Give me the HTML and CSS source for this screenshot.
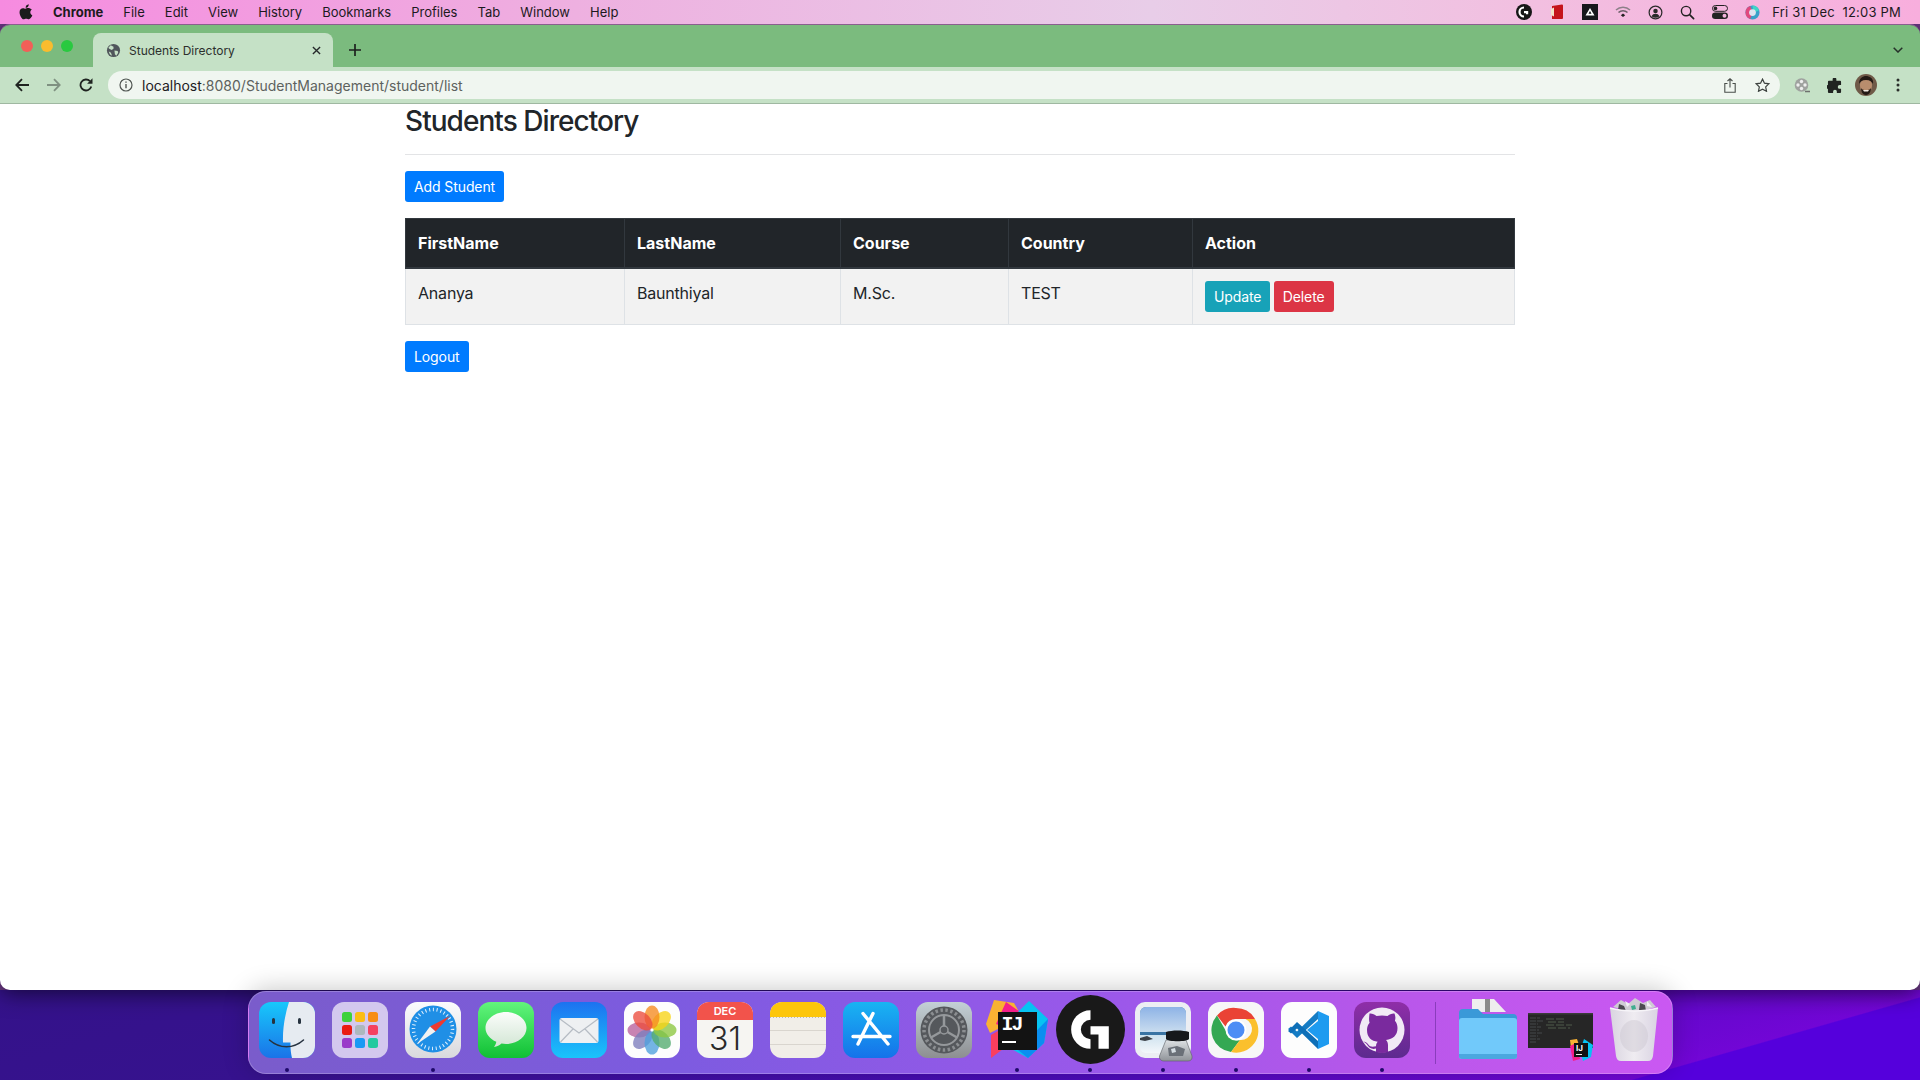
FILE: index.html
```html
<!DOCTYPE html>
<html lang="en">
<head>
    <meta charset="UTF-8">
    <meta name="viewport" content="width=device-width, initial-scale=1.0">
    <title>Students Directory</title>
    <link rel="stylesheet" href="styles.css">
</head>
<body>
    <!-- mac menu bar -->
    <div class="menubar">
        <svg class="apple" viewBox="0 0 16 18" width="14" height="16"><path fill="#1b1b1b" d="M11.2 0c.1 1.100-.3 2.100-.9 2.900-.7.800-1.700 1.400-2.700 1.300-.1-1 .4-2.100 1-2.800C9.200.6 10.300.1 11.200 0zM14.700 6.100c-1.100.7-1.800 1.800-1.800 3.100 0 1.500.9 2.800 2.300 3.400-.3.900-.7 1.700-1.200 2.500-.8 1.100-1.600 2.300-2.800 2.300s-1.600-.7-3-.7-1.900.7-3 .7-2-1.200-2.800-2.400C1.300 13.200.6 11.100.6 9.200c0-3 2-4.600 3.900-4.600 1.100 0 2.100.7 2.800.7s1.800-.8 3.100-.8c1.100 0 2.100.5 4.300 1.600z"/></svg>
        <span class="menu-item app-name">Chrome</span>
        <span class="menu-item">File</span>
        <span class="menu-item">Edit</span>
        <span class="menu-item">View</span>
        <span class="menu-item">History</span>
        <span class="menu-item">Bookmarks</span>
        <span class="menu-item">Profiles</span>
        <span class="menu-item">Tab</span>
        <span class="menu-item">Window</span>
        <span class="menu-item">Help</span>
        <div class="status-icons">
            <svg viewBox="0 0 16 16" width="16" height="16"><circle cx="8" cy="8" r="8" fill="#161616"/><path fill="none" stroke="#fff" stroke-width="2.200" d="M8 3.500a4.500 4.500 0 1 0 0 9"/><path fill="#fff" d="M8 7h4.200v3.200H10V9.300H8z"/></svg>
            <svg viewBox="0 0 16 16" width="16" height="16"><path fill="#c5141c" d="M3 2l10-1.500a1 1 0 0 1 1 1V14a1 1 0 0 1-1 1H3z"/><path fill="#f2e3c8" d="M2 5l3-1.500v9L2 11z"/></svg>
            <svg viewBox="0 0 16 16" width="16" height="16"><rect width="16" height="16" fill="#17171c"/><path fill="#fff" d="M8 4l4.500 7.500h-9z"/><path fill="#17171c" d="M8 7l1.500 2.700h-3z"/></svg>
            <svg viewBox="0 0 16 12" width="16" height="12"><path fill="none" stroke="#8d8089" stroke-width="1.500" d="M1 4a10 10 0 0 1 14 0"/><path fill="none" stroke="#6d6069" stroke-width="1.500" d="M3.500 6.500a6.500 6.500 0 0 1 9 0"/><path fill="#222" d="M8 7.500l2.200 1.800L8 11 5.800 9.300z"/></svg>
            <svg viewBox="0 0 16 16" width="15" height="15"><circle cx="8" cy="8" r="6.800" fill="none" stroke="#2a2a2a" stroke-width="1.300"/><circle cx="8" cy="6.300" r="2.400" fill="#2a2a2a"/><path fill="#2a2a2a" d="M3.800 12c.8-2 2.400-2.800 4.200-2.800s3.400.8 4.200 2.800a6 6 0 0 1-8.400 0z"/></svg>
            <svg viewBox="0 0 16 16" width="15" height="15"><circle cx="6.500" cy="6.500" r="5" fill="none" stroke="#222" stroke-width="1.500"/><path stroke="#222" stroke-width="1.800" stroke-linecap="round" d="M10.500 10.500l4 4"/></svg>
            <svg viewBox="0 0 16 14" width="16" height="14"><rect x=".5" y=".5" width="15" height="5.800" rx="2.900" fill="none" stroke="#222"/><circle cx="3.500" cy="3.400" r="1.800" fill="#222"/><rect y="7.600" width="16" height="6.400" rx="3.200" fill="#222"/><circle cx="12.500" cy="10.800" r="2" fill="#f3b4dd"/></svg>
            <svg viewBox="0 0 16 16" width="15" height="15"><circle cx="8" cy="8" r="7.500" fill="#3aa0c8"/><path fill="#e0487e" d="M.5 8a7.500 7.500 0 0 1 5-7l3 7-3 7a7.500 7.500 0 0 1-5-7z"/><path fill="#3fd5c6" d="M8 .5a7.500 7.500 0 0 1 7 5l-6 3z"/><circle cx="8" cy="8" r="3.600" fill="#dfe4f0"/></svg>
        </div>
        <span class="clock">Fri 31 Dec&nbsp; 12:03 PM</span>
    </div>

    <div class="window">
        <div class="tabstrip">
            <div class="lights">
                <span class="light red"></span>
                <span class="light yellow"></span>
                <span class="light green"></span>
            </div>
            <div class="tab">
                <svg viewBox="0 0 16 16" width="15" height="15"><circle cx="8" cy="8" r="7" fill="#50565b"/><path fill="#c5e1c6" d="M5 2.500l3 1.500v2L6 7.500 3.500 6 2.500 5zM9 8l3.500.5.500 2-2 3-1.500-1.500zM3 9l2 1 1 2v1.500L4 12z"/></svg>
                <span class="tab-title">Students Directory</span>
                <svg viewBox="0 0 10 10" width="9" height="9"><path stroke="#26292b" stroke-width="1.500" d="M1 1l8 8M9 1l-8 8"/></svg>
            </div>
            <svg class="new-tab" viewBox="0 0 12 12" width="12" height="12"><path stroke="#1d211e" stroke-width="1.700" d="M6 0v12M0 6h12"/></svg>
            <svg class="tab-menu" viewBox="0 0 10 6" width="10" height="6"><path fill="none" stroke="#26302a" stroke-width="1.500" d="M.7.7L5 5l4.300-4.300"/></svg>
        </div>

        <div class="toolbar">
            <div class="tool"><svg viewBox="0 0 14 14" width="14" height="14"><path fill="none" stroke="#1f2320" stroke-width="1.800" d="M14 7H1.500M7 1.200L1.300 7 7 12.800"/></svg></div>
            <div class="tool"><svg viewBox="0 0 14 14" width="14" height="14"><path fill="none" stroke="#7f9181" stroke-width="1.800" d="M0 7h12.500M7 1.200L12.700 7 7 12.800"/></svg></div>
            <div class="tool"><svg viewBox="0 0 14 14" width="14" height="14"><path fill="none" stroke="#1f2320" stroke-width="1.800" d="M12.300 8.500A5.500 5.500 0 1 1 11 3.200"/><path fill="#1f2320" d="M13.500.3v5.400H8.100z"/></svg></div>
            <div class="address">
                <svg viewBox="0 0 14 14" width="14" height="14"><circle cx="7" cy="7" r="6" fill="none" stroke="#4f5551" stroke-width="1.200"/><path stroke="#4f5551" stroke-width="1.400" d="M7 6v4.200M7 3.400v1.400"/></svg>
                <span class="url"><span class="url-host">localhost</span>:8080/StudentManagement/student/list</span>
                <div class="address-actions">
                    <div class="tool"><svg viewBox="0 0 12 15" width="12" height="15"><path fill="none" stroke="#4a4f4b" stroke-width="1.100" d="M3.500 5.500H.8v8.700h10.400V5.500H8.500M6 9.500V.8M3.500 3L6 .8 8.500 3"/></svg></div>
                    <div class="tool"><svg viewBox="0 0 16 15" width="15" height="14"><path fill="none" stroke="#3e4340" stroke-width="1.300" d="M8 1.200l2.100 4.400 4.800.6-3.500 3.300.9 4.700L8 11.900l-4.300 2.300.9-4.700L1.100 6.200l4.800-.6z"/></svg></div>
                </div>
            </div>
            <div class="tool"><svg viewBox="0 0 16 16" width="16" height="16"><circle cx="7.500" cy="8" r="6.800" fill="#9fa29f"/><circle cx="7.500" cy="4.500" r="1.700" fill="#efefef"/><circle cx="7.500" cy="11.500" r="1.700" fill="#efefef"/><circle cx="4" cy="8" r="1.700" fill="#efefef"/><circle cx="11" cy="8" r="1.700" fill="#efefef"/><path stroke="#6e716e" stroke-width="1.600" d="M11 14.500h5"/></svg></div>
            <div class="tool"><svg viewBox="0 0 16 16" width="15" height="15"><path fill="#202421" d="M6 1.500a2 2 0 0 1 4 0V3h4a1 1 0 0 1 1 1v3.500h-1.500a2 2 0 0 0 0 4H15V15a1 1 0 0 1-1 1h-3.500v-1.500a2 2 0 0 0-4 0V16H2a1 1 0 0 1-1-1v-3.500H.9a2 2 0 0 1 0-4H1V4a1 1 0 0 1 1-1h4z"/></svg></div>
            <div class="tool"><svg viewBox="0 0 22 22" width="22" height="22"><circle cx="11" cy="11" r="11" fill="#6f5a48"/><path fill="#b98d6d" d="M5 11c0-4 3-6 6-6s6 2 6 6c0 5-3 9-6 9s-6-4-6-9z"/><path fill="#231a15" d="M4 10c0-6 4-8 7-8s8 2 7 8c-1-2-3-4-7-4s-6 2-7 4zM6 14c1 2 3 2 5 2s4 0 5-2c0 4-2 7-5 7s-5-3-5-7z"/><path fill="#f0e8e0" d="M8 16h6l-1 1.500H9z"/></svg></div>
            <div class="tool"><svg viewBox="0 0 4 14" width="4" height="14"><g fill="#2a2e2b"><circle cx="2" cy="2" r="1.500"/><circle cx="2" cy="7" r="1.500"/><circle cx="2" cy="12" r="1.500"/></g></svg></div>
        </div>

        <div class="content">
            <div class="container">
                <h3>Students Directory</h3>
                <hr>
                <a class="btn btn-primary" href="#">Add Student</a>
                <table class="student-table">
                    <thead>
                        <tr>
                            <th class="col-first">FirstName</th>
                            <th class="col-last">LastName</th>
                            <th class="col-course">Course</th>
                            <th class="col-country">Country</th>
                            <th>Action</th>
                        </tr>
                    </thead>
                    <tbody>
                        <tr>
                            <td>Ananya</td>
                            <td>Baunthiyal</td>
                            <td>M.Sc.</td>
                            <td>TEST</td>
                            <td>
                                <a class="btn btn-info" href="#">Update</a>
                                <a class="btn btn-danger" href="#">Delete</a>
                            </td>
                        </tr>
                    </tbody>
                </table>
                <a class="btn btn-primary" href="#">Logout</a>
            </div>
        </div>
    </div>

    <!-- dock -->
    <div class="dock-row">
        <div class="dock">
            <div class="dock-item running">
                <svg viewBox="0 0 56 56" width="56" height="56">
                    <defs><linearGradient id="fa" x1="0" y1="0" x2="0" y2="1"><stop offset="0" stop-color="#18c8fb"/><stop offset="1" stop-color="#1a73e8"/></linearGradient></defs>
                    <rect width="56" height="56" rx="12" fill="url(#fa)"/>
                    <path fill="#e6ebf1" d="M30 0h14a12 12 0 0 1 12 12v32a12 12 0 0 1-12 12H33c-1.200-5-1.700-10-1.500-15.500H24c-.5-14 2-28 6-40.500z"/>
                    <rect x="13" y="16" width="3" height="6" rx="1.500" fill="#26323f"/><rect x="39" y="16" width="3" height="6" rx="1.500" fill="#26323f"/>
                    <path fill="none" stroke="#26323f" stroke-width="1.500" stroke-linecap="round" d="M10.500 38c10 9 24 9 34 0"/>
                </svg>
            </div>
            <div class="dock-item">
                <svg viewBox="0 0 56 56" width="56" height="56">
                    <rect width="56" height="56" rx="12" fill="#d3c8ee"/>
                    <rect x="10" y="10" width="10" height="10" rx="2.500" fill="#3ed13c"/><rect x="23" y="10" width="10" height="10" rx="2.500" fill="#fbbd14"/><rect x="36" y="10" width="10" height="10" rx="2.500" fill="#f78d14"/>
                    <rect x="10" y="23" width="10" height="10" rx="2.500" fill="#ea1b12"/><rect x="23" y="23" width="10" height="10" rx="2.500" fill="#adb8bd"/><rect x="36" y="23" width="10" height="10" rx="2.500" fill="#f5405f"/>
                    <rect x="10" y="36" width="10" height="10" rx="2.500" fill="#9a3bc9"/><rect x="23" y="36" width="10" height="10" rx="2.500" fill="#1899f5"/><rect x="36" y="36" width="10" height="10" rx="2.500" fill="#22c9a0"/>
                </svg>
            </div>
            <div class="dock-item running">
                <svg viewBox="0 0 56 56" width="56" height="56">
                    <defs><linearGradient id="sf" x1="0" y1="0" x2="0" y2="1"><stop offset="0" stop-color="#fbfbfd"/><stop offset="1" stop-color="#d9d9dd"/></linearGradient></defs>
                    <rect width="56" height="56" rx="12" fill="url(#sf)"/>
                    <circle cx="28" cy="27" r="23.500" fill="#1f8fe6"/>
                    <circle cx="28" cy="27" r="19.500" fill="none" stroke="#e6f2fc" stroke-width="3.500" stroke-dasharray="1 2.800"/>
                    <path fill="#ee3a30" d="M45 14L25 24.500l5.500 5z"/>
                    <path fill="#f2f2f2" d="M12 42l13-17.500 5.500 5z"/>
                </svg>
            </div>
            <div class="dock-item">
                <svg viewBox="0 0 56 56" width="56" height="56">
                    <defs>
                        <linearGradient id="ma" x1="0" y1="0" x2="0" y2="1"><stop offset="0" stop-color="#62f57c"/><stop offset="1" stop-color="#10c034"/></linearGradient>
                        <linearGradient id="mb" x1="0" y1="0" x2="0" y2="1"><stop offset="0" stop-color="#fbfdfb"/><stop offset="1" stop-color="#d2e6d4"/></linearGradient>
                    </defs>
                    <rect width="56" height="56" rx="12" fill="url(#ma)"/>
                    <path fill="url(#mb)" d="M28 10c11 0 20.500 7 20.500 16S39 42 28 42c-1.500 0-3-.1-4.500-.4-2 1.600-4.500 3-7.500 3.400 1.200-1.400 2-3.200 2.300-5.200C12 37 7.500 32 7.500 26 7.500 17 17 10 28 10z"/>
                </svg>
            </div>
            <div class="dock-item">
                <svg viewBox="0 0 56 56" width="56" height="56">
                    <defs><linearGradient id="ml" x1="0" y1="0" x2="0" y2="1"><stop offset="0" stop-color="#1d72f0"/><stop offset="1" stop-color="#1ac4fb"/></linearGradient></defs>
                    <rect width="56" height="56" rx="12" fill="url(#ml)"/>
                    <rect x="8.500" y="16" width="39" height="25" rx="2.500" fill="#eef0f2"/>
                    <path fill="none" stroke="#b6bcc4" stroke-width="1.200" d="M9 17l19 14 19-14M9.500 40l12.500-13M46.500 40L34 27"/>
                </svg>
            </div>
            <div class="dock-item">
                <svg viewBox="0 0 56 56" width="56" height="56">
                    <rect width="56" height="56" rx="12" fill="#fdfdfd"/>
                    <g fill-opacity=".78">
                        <ellipse cx="28" cy="15" rx="7.500" ry="11.500" fill="#b9609c" transform="rotate(270 28 28)"/>
                        <ellipse cx="28" cy="15" rx="7.500" ry="11.500" fill="#7c7cbd" transform="rotate(225 28 28)"/>
                        <ellipse cx="28" cy="15" rx="7.500" ry="11.500" fill="#4d9fdd" transform="rotate(180 28 28)"/>
                        <ellipse cx="28" cy="15" rx="7.500" ry="11.500" fill="#52ab6e" transform="rotate(135 28 28)"/>
                        <ellipse cx="28" cy="15" rx="7.500" ry="11.500" fill="#8cc63f" transform="rotate(90 28 28)"/>
                        <ellipse cx="28" cy="15" rx="7.500" ry="11.500" fill="#f7d316" transform="rotate(45 28 28)"/>
                        <ellipse cx="28" cy="15" rx="7.500" ry="11.500" fill="#f58a1f"/>
                        <ellipse cx="28" cy="15" rx="7.500" ry="11.500" fill="#ec4b3c" transform="rotate(315 28 28)"/>
                    </g>
                    <circle cx="28" cy="28" r="1" fill="#fff"/>
                </svg>
            </div>
            <div class="dock-item">
                <div class="calendar">
                    <div class="cal-month">DEC</div>
                    <div class="cal-day">31</div>
                </div>
            </div>
            <div class="dock-item">
                <svg viewBox="0 0 56 56" width="56" height="56">
                    <defs><clipPath id="nc"><rect width="56" height="56" rx="12"/></clipPath></defs>
                    <g clip-path="url(#nc)">
                        <rect width="56" height="56" fill="#f1eee8"/>
                        <rect width="56" height="15" fill="#fdc60b"/>
                        <path stroke="#d9d5ce" d="M0 28.500h56M0 42.500h56"/>
                        <path stroke="#bcb8b0" stroke-dasharray="1 2" d="M0 15.500h56"/>
                    </g>
                </svg>
            </div>
            <div class="dock-item">
                <svg viewBox="0 0 56 56" width="56" height="56">
                    <defs><linearGradient id="ap" x1="0" y1="0" x2="0" y2="1"><stop offset="0" stop-color="#19b4f2"/><stop offset="1" stop-color="#1572ea"/></linearGradient></defs>
                    <rect width="56" height="56" rx="12" fill="url(#ap)"/>
                    <path fill="none" stroke="#fff" stroke-width="3.400" stroke-linecap="round" d="M30 11.500L15 42M20 11.500L45 42M10 34.500h37"/>
                </svg>
            </div>
            <div class="dock-item">
                <svg viewBox="0 0 56 56" width="56" height="56">
                    <defs><linearGradient id="sy" x1="0" y1="0" x2="0" y2="1"><stop offset="0" stop-color="#c3d0d6"/><stop offset="1" stop-color="#8d8f91"/></linearGradient></defs>
                    <rect width="56" height="56" rx="12" fill="url(#sy)"/>
                    <circle cx="28" cy="28" r="23.500" fill="#55585c"/>
                    <circle cx="28" cy="28" r="20" fill="none" stroke="#8b8e91" stroke-width="3.500" stroke-dasharray="2.500 2.500"/>
                    <circle cx="28" cy="28" r="15" fill="none" stroke="#95989b" stroke-width="2"/>
                    <path fill="none" stroke="#95989b" stroke-width="2.500" d="M28 28V13M28 28l13 7.500M28 28l-13 7.500"/>
                    <circle cx="28" cy="28" r="4" fill="#55585c" stroke="#95989b" stroke-width="1.500"/>
                </svg>
            </div>
            <div class="dock-item running">
                <svg class="ij-back" viewBox="0 0 62 61" width="62" height="61">
                    <path fill="#f9b233" d="M8 1l20 3 8 14-32 16-4-9z"/>
                    <path fill="#f51f8a" d="M20 3l20 14-6 18-24-10z"/>
                    <path fill="#07c3f2" d="M43 2l19 18-4 24-16 15-22-12 8-30z"/>
                    <path fill="#0a8ef0" d="M62 20l-4 24-16 15-10-8z"/>
                    <path fill="#fb3e5e" d="M5 36l14-8 6 16L5 59z"/>
                </svg>
                <div class="ij-box"><span class="ij-text">IJ</span><span class="ij-bar"></span></div>
            </div>
            <div class="dock-item running">
                <svg class="big-g" viewBox="0 0 69 69" width="69" height="69">
                    <circle cx="34.500" cy="34.500" r="34.500" fill="#191919"/>
                    <path fill="none" stroke="#fff" stroke-width="9.700" d="M34.500 20a14.500 14.500 0 1 0 0 29"/>
                    <path fill="#fff" d="M34.500 31.200h18.300v22.600H42.500V39.500h-8z"/>
                </svg>
            </div>
            <div class="dock-item running">
                <svg class="script" viewBox="0 0 56 56" width="56" height="56">
                    <defs>
                        <linearGradient id="se" x1="0" y1="0" x2="0" y2="1"><stop offset="0" stop-color="#8db3e6"/><stop offset="1" stop-color="#c9dcef"/></linearGradient>
                        <linearGradient id="sw" x1="0" y1="0" x2="0" y2="1"><stop offset="0" stop-color="#4f86ad"/><stop offset=".5" stop-color="#c4dcec"/><stop offset="1" stop-color="#f3f7fa"/></linearGradient>
                        <linearGradient id="gl" x1="0" y1="0" x2="0" y2="1"><stop offset="0" stop-color="#dde1e4"/><stop offset="1" stop-color="#8f9398"/></linearGradient>
                    </defs>
                    <rect width="56" height="56" rx="10" fill="#eceef3"/>
                    <rect x="5" y="5" width="46" height="46" rx="6" fill="url(#sw)"/>
                    <path fill="url(#se)" d="M11 5h34a6 6 0 0 1 6 6v19H5V11a6 6 0 0 1 6-6z"/>
                    <rect x="5" y="30" width="46" height="3" fill="#3a74a4"/>
                    <path fill="#3c4148" d="M5 36l7-2 6 3-8 2-5-1z"/>
                    <path fill="url(#gl)" stroke="#5a5e63" stroke-width=".6" d="M31 38h20l6 16c.5 3-1 5-4 5H29c-3 0-5-2-4.500-5z"/>
                    <path fill="#6a7078" d="M33 46l9-2 8 3-2 7H34z"/>
                    <path fill="#d5dde3" d="M36 47l4-1 1 4-4 1z"/>
                    <path fill="#16181b" d="M31 30c6-2 17-2 23 0v7c-2 3-21 3-23 0z"/>
                </svg>
            </div>
            <div class="dock-item running">
                <svg viewBox="0 0 56 56" width="56" height="56">
                    <rect width="56" height="56" rx="12" fill="#f7f7f7"/>
                    <path fill="#ea4335" d="M28 6a22 22 0 0 1 19 11H28a11 11 0 0 0-10.500 7.500L9 13.500A22 22 0 0 1 28 6z"/>
                    <path fill="#34a853" d="M9 13.500l9.500 16.500A11 11 0 0 0 32 38l-9 12A22 22 0 0 1 9 13.500z"/>
                    <path fill="#fbc02d" d="M47 17a22 22 0 0 1-24 33l9-12a11 11 0 0 0 5.500-21z"/>
                    <circle cx="28" cy="28" r="10.500" fill="#fff"/>
                    <circle cx="28" cy="28" r="8.500" fill="#4d8df5"/>
                </svg>
            </div>
            <div class="dock-item running">
                <svg viewBox="0 0 56 56" width="56" height="56">
                    <rect width="56" height="56" rx="11" fill="#fdfdfd"/>
                    <path fill="#157cc4" d="M37 9L16 29.500 10 24.500 7 27l9 9L37 17z"/>
                    <path fill="#0e6fb8" d="M37 47L16 26.500l-6 5-3-2.500 9-9L37 39z"/>
                    <path fill="#1e9bf0" d="M37 9l11 5v28l-11 5V37l-11-9 11-9z"/>
                </svg>
            </div>
            <div class="dock-item running">
                <svg viewBox="0 0 56 56" width="56" height="56">
                    <defs><linearGradient id="gh" x1="0" y1="0" x2="0" y2="1"><stop offset="0" stop-color="#8f2ea8"/><stop offset="1" stop-color="#5d2a8f"/></linearGradient></defs>
                    <rect width="56" height="56" rx="12" fill="url(#gh)"/>
                    <circle cx="28" cy="28" r="22.500" fill="#f1eaf5"/>
                    <path fill="#7a2a9e" d="M15.500 11.500c2.500-.3 5 .8 7 2.500 3.500-.8 7.500-.8 11 0 2-1.700 4.500-2.800 7-2.500 1 2.500 1.200 5 .4 7.300 1.700 2 2.600 4.400 2.600 7.200 0 7.500-4.500 11-11.500 11.900 1.300 1.200 2 3 2 5.300V50c-4 1.300-8 1.300-12 0v-3.400c-4 1.200-7-.5-9-4-1-1.500-2.500-2.500-4-3 2 .2 4 1 5.300 3 1.500 2.300 4 2.600 7.700 1.700 0-1.600.6-3.300 1.700-4.500C17.500 39 13 35.500 13 28c0-2.800.9-5.200 2.600-7.200-.8-2.300-.6-4.800-.1-9.300z"/>
                </svg>
            </div>
            <div class="dock-divider"></div>
            <div class="dock-item">
                <svg viewBox="0 0 58 62" width="58" height="62" class="folder">
                    <path fill="#eeeeee" d="M13 1h22l12 13H13z"/>
                    <rect x="26" y="1" width="5" height="13" fill="#8a8a8a"/>
                    <path fill="#3a99d8" d="M0 15a4 4 0 0 1 4-4h15l5 5h30a4 4 0 0 1 4 4v36H0z"/>
                    <path fill="#71c9fa" d="M0 23a3 3 0 0 1 3-3h52a3 3 0 0 1 3 3v35a3 3 0 0 1-3 3H3a3 3 0 0 1-3-3z"/>
                    <path fill="#4ba7df" d="M0 56h58v2a3 3 0 0 1-3 3H3a3 3 0 0 1-3-3z"/>
                </svg>
            </div>
            <div class="dock-item">
                <svg viewBox="0 0 65 49" width="65" height="49" class="thumb">
                    <rect y="0" width="65" height="35" fill="#262626"/>
                    <rect y="0" width="65" height="1.500" fill="#3b3b3b"/>
                    <path stroke="#45484b" stroke-dasharray="6 1" d="M2 5h10M2 8h13M2 11h8M2 14h11M2 17h9M2 20h12M2 23h8M2 26h10M2 29h7"/>
                    <path stroke="#4f5a4a" stroke-dasharray="8 2" d="M18 6h20M20 9h16M18 12h26M20 15h22"/>
                    <path fill="#f9b233" d="M42 27l7-1 2 6-8 3z"/>
                    <path fill="#f51f8a" d="M42 33l6-3 4 16-7 2z"/><path fill="#07c3f2" d="M56 26l9 6-2 12-8 4-3-10z"/>
                    <rect x="46" y="30" width="14" height="14" fill="#111"/>
                    <text x="48" y="38" class="thumb-ij">IJ</text>
                    <rect x="48" y="41" width="6" height="1" fill="#eee"/>
                </svg>
            </div>
            <div class="dock-item">
                <svg viewBox="0 0 50 64" width="50" height="64" class="trash">
                    <defs><linearGradient id="tr" x1="0" y1="0" x2="1" y2="0"><stop offset="0" stop-color="#d9d4e0"/><stop offset=".5" stop-color="#efecf1"/><stop offset="1" stop-color="#d9d3e2"/></linearGradient></defs>
                    <path fill="#cfccd4" d="M4 9l8-7 7 4 7-6 8 5 7-3 6 7-20 6z"/>
                    <path fill="#4b4950" d="M10 6l5 2 2 5-8-1zM31 5l5 2 1 6-7-1z"/>
                    <path fill="#3fae8f" d="M22 8l4-1 1 4-4 1z"/>
                    <path fill="#f2f0f4" d="M16 3l5 3-3 3zM38 3l5 6-5-1z"/>
                    <path fill="url(#tr)" d="M1 10c14 4 34 4 48 0l-5 48c-.5 3-2 5-5 5H12c-3 0-4.500-2-5-5z"/>
                    <path fill="none" stroke="#f6f4f8" stroke-width="1.500" d="M1 10c14 4 34 4 48 0"/>
                    <ellipse cx="25" cy="38" rx="14" ry="16" fill="#c9c4cc" opacity=".4"/>
                </svg>
            </div>
        </div>
    </div>
</body>
</html>
```

FILE: styles.css
```css
body {
    font-family: Inter, "Liberation Sans", sans-serif;
    margin: 0;
    padding: 0;
    height: 100vh;
    overflow: hidden;
    display: flex;
    flex-direction: column;
    color: #212529;
    background-color: #6d3a88;
    /* wallpaper, only the strip under the window shows */
    background-image: linear-gradient(344deg, #5500dc 12.8%, #7206d6 13%, #4a0cb8 40%, #36128e 75%, #34128a 100%);
    background-size: 100% 90px;
    background-position: bottom;
    background-repeat: no-repeat;
}

/* menu bar */
.menubar {
    height: 24px;
    flex: none;
    display: flex;
    align-items: center;
    position: relative;
    z-index: 2;
    font-size: 13px;
    color: #1c1a1d;
    background: linear-gradient(90deg, #f68be0 0%, #eeb0e0 30%, #e8cde8 60%, #f2bfe0 80%, #f8aedd 100%);
}

.apple {
    margin-left: 19px;
    margin-right: 10px;
}

.menu-item {
    padding: 0 10px;
}

.app-name {
    font-weight: 700;
}

.status-icons {
    margin-left: auto;
    display: flex;
    align-items: center;
    gap: 17px;
}

.clock {
    letter-spacing: .2px;
    margin-left: 12px;
    margin-right: 19px;
}

/* browser window */
.window {
    flex: 1;
    display: flex;
    flex-direction: column;
    position: relative;
    z-index: 1;
    border-radius: 10px;
    overflow: hidden;
    border-top: 1px solid #8a5f8e;
    box-shadow: 0 3px 22px rgba(0, 0, 0, .6);
}

.tabstrip {
    height: 42px;
    flex: none;
    display: flex;
    align-items: flex-end;
    background-color: #7bbb7e;
}

.lights {
    display: flex;
    gap: 8px;
    margin-left: 21px;
    align-self: flex-start;
    margin-top: 15px;
}

.light {
    width: 12px;
    height: 12px;
    border-radius: 50%;
}

.red { background-color: #f25f58; }
.yellow { background-color: #f9bc2e; }
.green { background-color: #29c940; }

.tab {
    width: 240px;
    height: 34px;
    margin-left: 20px;
    box-sizing: border-box;
    padding: 0 12px 0 13px;
    display: flex;
    align-items: center;
    gap: 8px;
    background-color: #c5e1c6;
    border-radius: 8px 8px 0 0;
}

.tab-title {
    flex: 1;
    font-size: 12px;
    color: #2c302d;
}

.new-tab {
    margin-left: 16px;
    margin-bottom: 11px;
}

.tab-menu {
    margin-left: auto;
    margin-right: 17px;
    margin-bottom: 14px;
}

.toolbar {
    height: 37px;
    flex: none;
    display: flex;
    align-items: center;
    padding: 0 6px;
    box-sizing: border-box;
    background-color: #c5e1c6;
    border-bottom: 1px solid #9fb8a1;
}

.tool {
    width: 32px;
    height: 28px;
    flex: none;
    display: flex;
    align-items: center;
    justify-content: center;
}

.address {
    flex: 1;
    height: 28px;
    margin: 0 6px;
    padding-left: 11px;
    padding-right: 2px;
    display: flex;
    align-items: center;
    gap: 9px;
    border-radius: 14px;
    background-color: #f0f6f0;
}

.url {
    font-size: 14px;
    color: #5d625e;
}

.url-host {
    color: #1d201e;
}

.address-actions {
    margin-left: auto;
    display: flex;
}

/* page */
.content {
    flex: 1;
    background-color: #fff;
}

.container {
    width: 1110px;
    margin: 0 auto;
}

h3 {
    font-size: 28px;
    font-weight: 500;
    line-height: 1.2;
    letter-spacing: -.95px;
    margin: 0;
    padding-top: 1px;
}

hr {
    margin: 15px 0 16px;
    border: 0;
    border-top: 1px solid #e3e4e6;
}

.btn {
    display: inline-block;
    padding: 4px 8px;
    font-size: 14px;
    line-height: 1.5;
    letter-spacing: -.1px;
    color: #fff;
    border: 1px solid transparent;
    border-radius: 3px;
    text-decoration: none;
}

.btn-primary { background-color: #007bff; }
.btn-info { background-color: #17a2b8; }
.btn-danger { background-color: #dc3545; margin-left: -1px; }

.student-table {
    width: 100%;
    margin: 16px 0;
    border-collapse: collapse;
    table-layout: fixed;
    font-size: 16px;
    line-height: 1.5;
}

.student-table th,
.student-table td {
    box-sizing: border-box;
    padding: 12px;
    text-align: left;
    vertical-align: top;
}

.student-table th {
    color: #fff;
    font-weight: 700;
    background-color: #212529;
    border: 1px solid #32383e;
    border-bottom-width: 2px;
}

.student-table td {
    letter-spacing: -.2px;
    background-color: #f2f2f2;
    border: 1px solid #dee2e6;
}

.col-first { width: 219px; }
.col-last { width: 216px; }
.col-course { width: 168px; }
.col-country { width: 184px; }

/* dock */
.dock-row {
    height: 90px;
    flex: none;
    display: flex;
    justify-content: center;
    position: relative;
    z-index: 2;
}

.dock {
    width: 1425px;
    height: 83px;
    margin-top: 1px;
    padding-left: 2px;
    box-sizing: border-box;
    display: flex;
    align-items: flex-start;
    border-radius: 18px;
    border: 1px solid rgba(255, 255, 255, .22);
    background: linear-gradient(90deg, #7a5ccb 0%, #7d5be0 30%, #9a58ea 60%, #b857ea 80%, #ca58f2 100%);
    box-shadow: 0 -2px 26px rgba(0, 0, 0, .22);
}

.dock-item {
    width: 73px;
    height: 81px;
    flex: none;
    padding-top: 10px;
    box-sizing: border-box;
    display: flex;
    justify-content: center;
    position: relative;
}

.running::after {
    content: "";
    position: absolute;
    left: 50%;
    bottom: 1px;
    width: 4px;
    height: 4px;
    margin-left: -2px;
    border-radius: 50%;
    background-color: #1f0a6a;
}

.dock-divider {
    width: 1px;
    height: 62px;
    margin: 10px 15px 0 16px;
    flex: none;
    background-color: #8a3cbc;
}

.calendar {
    width: 56px;
    height: 56px;
    border-radius: 12px;
    overflow: hidden;
    text-align: center;
    background-color: #f6f5f2;
}

.cal-month {
    height: 18px;
    font-size: 11px;
    font-weight: 600;
    line-height: 18px;
    color: #fff;
    background-color: #f2534b;
}

.cal-day {
    font-size: 32px;
    font-weight: 300;
    line-height: 38px;
    color: #2a2a2a;
}

.script {
    overflow: visible;
}

.ij-back,
.big-g,
.folder,
.thumb,
.trash {
    position: absolute;
}

.ij-back { top: 7px; left: 5px; }
.big-g { top: 3px; left: 2px; }
.folder { top: 6px; left: 8px; }
.thumb { top: 21px; left: 4px; }
.trash { top: 6px; left: 12px; }

.ij-box {
    position: absolute;
    top: 20px;
    left: 17px;
    width: 39px;
    height: 38px;
    box-sizing: border-box;
    padding: 3px 4px;
    display: flex;
    flex-direction: column;
    background-color: #131313;
}

.ij-text {
    font-family: "Liberation Mono", monospace;
    font-size: 20px;
    font-weight: 700;
    line-height: 20px;
    letter-spacing: -2px;
    color: #fff;
}

.ij-bar {
    width: 14px;
    height: 2px;
    margin-top: 6px;
    background-color: #fff;
}

.thumb-ij {
    font-size: 8px;
    font-weight: 700;
    fill: #fff;
}
```
